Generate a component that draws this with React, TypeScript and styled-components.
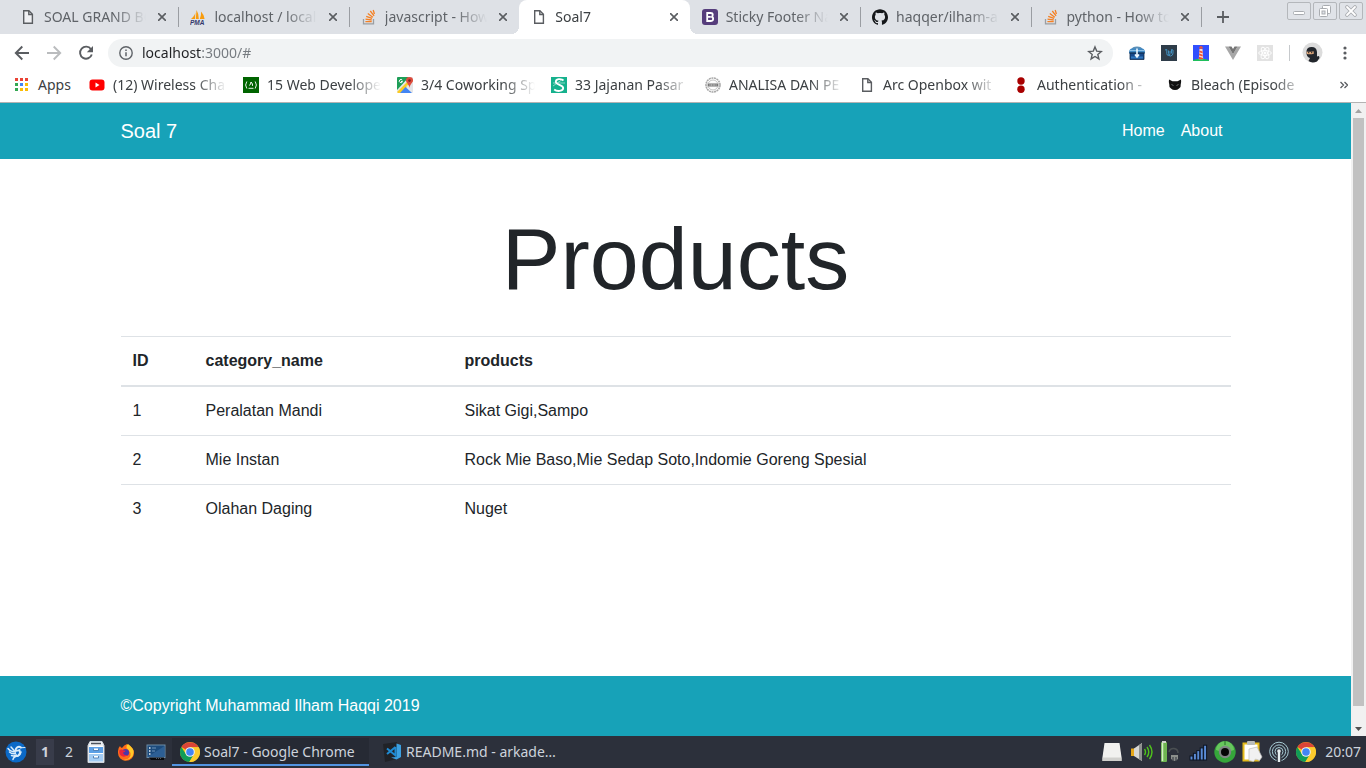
import React from "react";
import styled, { createGlobalStyle, css } from "styled-components";
import { SiGithub } from "react-icons/si";

const UI_FONT = `"Noto Sans", "Open Sans", sans-serif`;
const PAGE_FONT = `"Liberation Sans", Arial, sans-serif`;
const TEAL = "#17a2b8";

const GlobalStyle = createGlobalStyle`
  *, *::before, *::after { box-sizing: border-box; }
  body { margin: 0; background: #fff; }
  button { border: 0; padding: 0; background: none; font: inherit; color: inherit; cursor: pointer; }
  a { color: inherit; text-decoration: none; }
  svg { display: block; flex: none; }
`;

const Desktop = styled.div`
  display: flex;
  flex-direction: column;
  min-height: 100vh;
  font-family: ${UI_FONT};
`;

/* ---------- tab strip ---------- */

const TabStrip = styled.header`
  display: flex;
  height: 34px;
  padding-left: 8px;
  background: #dee1e6;
`;

const TabList = styled.nav`
  display: flex;
  flex: 0 1 1193px;
  min-width: 0;
`;

const TabItem = styled.div<{ $active?: boolean; $divider?: boolean }>`
  position: relative;
  display: flex;
  flex: 1 1 0;
  align-items: center;
  gap: 8px;
  min-width: 0;
  padding: 0 8px 0 12px;
  color: ${(p) => (p.$active ? "#3c4043" : "#5f6368")};

  ${(p) =>
    p.$divider &&
    css`
      &::after {
        content: "";
        position: absolute;
        right: -1px;
        top: 7px;
        width: 1px;
        height: 20px;
        background: #9a9da2;
      }
    `}

  ${(p) =>
    p.$active &&
    css`
      background: #fff;
      border-radius: 8px 8px 0 0;
      &::before,
      &::after {
        content: "";
        position: absolute;
        bottom: 0;
        width: 8px;
        height: 8px;
      }
      &::before {
        right: 100%;
        background: radial-gradient(circle at 0 0, transparent 8px, #fff 8px);
      }
      &::after {
        left: 100%;
        background: radial-gradient(circle at 100% 0, transparent 8px, #fff 8px);
      }
    `}
`;

const FadeText = styled.span`
  flex: 1;
  min-width: 0;
  overflow: hidden;
  white-space: nowrap;
  font-size: 14px;
  line-height: 20px;
  mask-image: linear-gradient(to right, #000 calc(100% - 32px), transparent);
`;

const TabLink = styled.a`
  display: flex;
  flex: 1;
  align-items: center;
  gap: 8px;
  min-width: 0;
`;

const IconButton = styled.button<{ $size: number; $color?: string }>`
  display: flex;
  flex: none;
  align-items: center;
  justify-content: center;
  width: ${(p) => p.$size}px;
  height: ${(p) => p.$size}px;
  color: ${(p) => p.$color ?? "#5a5d61"};
`;

const NewTab = styled(IconButton)`
  margin: 6px 0 0 11px;
`;

const WindowControls = styled.div`
  display: flex;
  gap: 2px;
  margin-left: auto;
  padding: 2px 3px 0 0;
`;

const WindowButton = styled.button`
  display: flex;
  align-items: center;
  justify-content: center;
  width: 24px;
  height: 18px;
  border: 1px solid #b4b7bb;
  border-radius: 2px;
  background: #e0e3e8;
`;

/* ---------- toolbar ---------- */

const Toolbar = styled.div`
  display: flex;
  align-items: center;
  height: 36px;
  padding: 2px 9px 0 10px;
  background: #fff;
`;

const NavButtons = styled.div`
  display: flex;
  gap: 8px;
  margin-right: 10px;
`;

const Omnibox = styled.label`
  display: flex;
  flex: 1;
  align-items: center;
  gap: 8px;
  height: 28px;
  padding: 0 10px;
  border-radius: 14px;
  background: #f1f3f4;
`;

const UrlInput = styled.input`
  flex: 1;
  min-width: 0;
  height: 20px;
  padding: 0;
  border: 0;
  outline: 0;
  font: 14px/20px ${UI_FONT};
  color: transparent;
  background: linear-gradient(to right, #202124 59px, #757a7f 59px);
  background-clip: text;
  -webkit-background-clip: text;
`;

const Extensions = styled.div`
  display: flex;
  align-items: center;
  gap: 16px;
  margin-left: 16px;
`;

const ToolDivider = styled.span`
  width: 1px;
  height: 16px;
  margin: 0 9px 0 16px;
  background: #c6c9cc;
`;

const ProfileTools = styled.div`
  display: flex;
  align-items: center;
  gap: 6px;
`;

/* ---------- bookmarks ---------- */

const BookmarkBar = styled.nav`
  display: flex;
  align-items: center;
  gap: 16px;
  height: 33px;
  padding: 0 14px 2px 14px;
  border-bottom: 1px solid #b3b3b3;
  background: #fff;
  color: #3c4043;
`;

const Bookmark = styled.a<{ $fit?: boolean }>`
  display: flex;
  flex: 0 1 ${(p) => (p.$fit ? "59px" : "138px")};
  align-items: center;
  gap: 8px;
  min-width: 0;
`;

const PlainText = styled.span`
  font-size: 14px;
  line-height: 20px;
`;

const Overflow = styled(IconButton)`
  margin-left: auto;
`;

/* ---------- web page ---------- */

const Viewport = styled.div`
  display: flex;
  flex: 1;
`;

const Page = styled.div`
  display: flex;
  flex: 1;
  flex-direction: column;
  min-width: 0;
  font: 16px/24px ${PAGE_FONT};
  color: #212529;
`;

const Container = styled.div`
  width: 100%;
  max-width: 1140px;
  margin: 0 auto;
  padding: 0 15px;
`;

const SiteNav = styled.nav`
  background: ${TEAL};
  color: #fff;
`;

const NavInner = styled(Container)`
  display: flex;
  align-items: center;
  justify-content: space-between;
  height: 56px;
`;

const Brand = styled.a`
  font-size: 20px;
  line-height: 30px;
`;

const NavLinks = styled.div`
  display: flex;
`;

const NavLink = styled.a`
  padding: 8px;
`;

const Content = styled.main`
  flex: 1;
`;

const Title = styled.h1`
  margin: 48px 0 26px;
  font-size: 88px;
  font-weight: 400;
  line-height: 103px;
  text-align: center;
`;

const DataTable = styled.table`
  width: 100%;
  border-collapse: collapse;
  text-align: left;

  th,
  td {
    padding: 12px;
    border-top: 1px solid #dee2e6;
  }
  thead th {
    border-bottom: 2px solid #dee2e6;
  }
`;

const Col = styled.col<{ $width?: number }>`
  width: ${(p) => (p.$width ? `${p.$width}px` : "auto")};
`;

const SiteFooter = styled.footer`
  background: ${TEAL};
  color: #fff;
  line-height: 60px;
`;

const ScrollTrack = styled.div`
  display: flex;
  flex-direction: column;
  align-items: center;
  width: 15px;
  background: #f1f1f1;
`;

const ScrollArrow = styled.button`
  display: flex;
  align-items: center;
  justify-content: center;
  width: 15px;
  height: 15px;
`;

const ScrollThumb = styled.div`
  flex: 1;
  width: 11px;
  margin-bottom: 15px;
  background: #c1c1c1;
`;

/* ---------- desktop panel ---------- */

const Panel = styled.footer`
  display: flex;
  align-items: center;
  height: 32px;
  padding: 0 5px;
  background: #2c303b;
  color: #cdd3dc;
  font-size: 14px;
  line-height: 20px;
`;

const Workspace = styled.button<{ $current?: boolean }>`
  width: 18px;
  height: 26px;
  font-weight: ${(p) => (p.$current ? 700 : 400)};
  background: ${(p) => (p.$current ? "#383c4a" : "transparent")};
`;

const Workspaces = styled.div`
  display: flex;
  gap: 6px;
  margin: 0 8px 0 9px;
`;

const Launchers = styled.div`
  display: flex;
  align-items: center;
  gap: 10px;
  margin-right: 6px;
`;

const Task = styled.button<{ $current?: boolean }>`
  display: flex;
  flex: 0 1 197px;
  align-items: center;
  gap: 4px;
  min-width: 0;
  height: 28px;
  padding: 0 8px;
  margin-right: 6px;
  white-space: nowrap;
  background: ${(p) => (p.$current ? "#262a34" : "transparent")};
  box-shadow: ${(p) => (p.$current ? "inset 0 -2px #5294e2" : "none")};
`;

const Tray = styled.div`
  display: flex;
  align-items: center;
  gap: 5px;
  margin-left: auto;
`;

const TraySlot = styled.span<{ $wide?: boolean }>`
  display: flex;
  flex: none;
  justify-content: center;
  width: ${(p) => (p.$wide ? 24 : 22)}px;
`;

const Clock = styled.time`
  margin-left: 3px;
`;

/* ---------- icons ---------- */

const FileIcon = () => (
  <svg width="16" height="16" viewBox="0 0 16 16" fill="#fff" fillOpacity=".5" stroke="#5a5d61" strokeWidth="1.4">
    <path d="M3.7 1.7h5.2l3.5 3.6v9H3.7z" />
    <path d="M8.8 1.9v3.6h3.5" fill="none" />
  </svg>
);

const PmaIcon = () => (
  <svg width="16" height="16" viewBox="0 0 16 16">
    <path d="M5.5 1.5Q5.8 6 1 10h4zM6.5 1Q9 5 8.8 10H5.8zM11 2.5q3 3 3.6 7.5H9.8Q11.5 6 11 2.5z" fill="#f89c0e" />
    <text x="0" y="15.5" fontSize="6.5" fontWeight="700" fontStyle="italic" fontFamily="Liberation Sans" fill="#34386b">PMA</text>
  </svg>
);

const StackIcon = () => (
  <svg width="16" height="16" viewBox="0 0 16 16" fill="none" strokeWidth="1.3">
    <path d="M2.5 10v4.8h10V10" stroke="#9a9ea2" />
    <path d="M4.4 12.7h6.3M4.5 10.2l6.2.8M5.2 7.3l5.9 2M6.8 4.4l5 3.8M9.3 2l3.8 4.9M12.2 1l1.2 4" stroke="#f48024" />
  </svg>
);

const BootstrapIcon = () => (
  <svg width="16" height="16" viewBox="0 0 16 16">
    <rect width="16" height="16" rx="3" fill="#563d7c" />
    <path d="M5.2 4h3.4c2.8 0 2.8 3.2.8 3.8 2.6.4 2.3 4.2-.8 4.2H5.2zM5.4 7.8h3.4" fill="none" stroke="#fff" strokeWidth="1.8" />
  </svg>
);

const CloseIcon = () => (
  <svg width="8" height="8" viewBox="0 0 8 8" stroke="currentColor" strokeWidth="1.6">
    <path d="M0 0l8 8M8 0L0 8" />
  </svg>
);

const YoutubeIcon = () => (
  <svg width="16" height="16" viewBox="0 0 16 16">
    <rect x="0.5" y="2.5" width="15" height="11" rx="3" fill="#f00" />
    <path d="M6.5 5.6v4.8l4-2.4z" fill="#fff" />
  </svg>
);

const AppsIcon = () => (
  <svg width="16" height="16" viewBox="0 0 16 16">
    {["#ea4335", "#ea4335", "#ea4335", "#34a853", "#4285f4", "#fbbc05", "#34a853", "#fbbc05", "#fbbc05"].map((c, i) => (
      <rect key={i} x={1 + (i % 3) * 5} y={1 + Math.floor(i / 3) * 5} width="3" height="3" fill={c} />
    ))}
  </svg>
);

const CampIcon = () => (
  <svg width="16" height="16" viewBox="0 0 16 16" fill="none" stroke="#fff">
    <rect width="16" height="16" fill="#006400" stroke="none" />
    <path d="M3.8 4.5q-2.4 3.5 0 7M12.2 4.5q2.4 3.5 0 7M5.5 11.3h5" strokeWidth=".9" />
    <path d="M8 5q2 2 1.500 3.800M8 5Q7.800 7 6.500 8.500" strokeWidth="1" />
  </svg>
);

const MapsIcon = () => (
  <svg width="16" height="16" viewBox="0 0 16 16">
    <rect width="16" height="16" rx="1" fill="#e7e8ea" />
    <path d="M0 1q0-1 1-1h11L0 13z" fill="#1e9e57" />
    <path d="M0 15L14 1l2 2v1L4 16H1z" fill="#fbcb24" />
    <path d="M3 16l5.5-6L15 16z" fill="#4285f4" />
    <path d="M9 9l7 6V6z" fill="#e3e4e6" />
    <path d="M12.5 0A3.5 3.5 0 0 0 9 3.6C9 6 12 7 12.5 11 13 7 16 6 16 3.6A3.5 3.5 0 0 0 12.500 0z" fill="#dd4b3e" />
    <circle cx="12.500" cy="3.600" r="1.300" fill="#7d231d" />
    <path d="M5.300 3.200A1.600 1.600 0 1 0 5.500 4.500H4" fill="none" stroke="#fff" />
  </svg>
);

const SIcon = () => (
  <svg width="16" height="16" viewBox="0 0 16 16" fill="none" stroke="#fff">
    <rect width="16" height="16" fill="#16b18d" stroke="none" />
    <path d="M12.500 3.500C10 1 4.500 2 4.800 5s7.400 2.800 7.400 6-6 4-9 1.500" strokeWidth="1.800" />
    <path d="M12 2L2 9M2 6h12" strokeWidth=".5" />
  </svg>
);

const SealIcon = () => (
  <svg width="16" height="16" viewBox="0 0 16 16" fill="none" stroke="#a9a9a9">
    <circle cx="8" cy="8" r="7" strokeWidth="1.600" strokeDasharray="2 .6" />
    <circle cx="8" cy="8" r="5" strokeWidth=".7" />
    <rect x="2.500" y="6.200" width="11" height="3.600" fill="#777" stroke="#ddd" strokeWidth=".6" />
    <path d="M4.500 8h7" stroke="#eee" strokeDasharray="1 .6" />
  </svg>
);

const DotsIcon = () => (
  <svg width="16" height="16" viewBox="0 0 16 16" fill="#a80000">
    <circle cx="8" cy="4" r="3.700" />
    <circle cx="8" cy="12.200" r="3.700" />
  </svg>
);

const CatIcon = () => (
  <svg width="16" height="16" viewBox="0 0 16 16">
    <path d="M2 2.500l3.500 1.800h5L14 2.500q.5 3-.3 5 .5 3-1.700 4-1.500 1.500-4 1.500t-4-1.500q-2.200-1-1.700-4-.8-2-.3-5z" fill="#111" />
    <path d="M4.500 7.500l2 1M11.500 7.500l-2 1" stroke="#999" strokeWidth=".7" fill="none" />
  </svg>
);

const BackIcon = () => (
  <svg width="16" height="16" viewBox="0 0 16 16" fill="none" stroke="currentColor" strokeWidth="1.900">
    <path d="M15 8H2M8.300 1.500L1.800 8l6.500 6.500" />
  </svg>
);

const ForwardIcon = () => (
  <svg width="16" height="16" viewBox="0 0 16 16" fill="none" stroke="currentColor" strokeWidth="1.900">
    <path d="M1 8h13M7.700 1.500L14.200 8l-6.500 6.500" />
  </svg>
);

const ReloadIcon = () => (
  <svg width="16" height="16" viewBox="0 0 16 16">
    <path d="M13 4.200A6 6 0 1 0 13.800 9.500" fill="none" stroke="currentColor" strokeWidth="1.900" />
    <path d="M15 1v6.200H8.800z" fill="currentColor" />
  </svg>
);

const InfoIcon = () => (
  <svg width="16" height="16" viewBox="0 0 16 16" fill="none" stroke="#5f6368" strokeWidth="1.400">
    <circle cx="8" cy="8" r="6.200" />
    <path d="M8 7.200v4M8 4.600v1.400" strokeWidth="1.500" />
  </svg>
);

const StarIcon = () => (
  <svg width="16" height="16" viewBox="0 0 16 16" fill="none" stroke="currentColor" strokeWidth="1.400">
    <path d="M8 1.900l1.700 4.200 4.600.4-3.500 3 1.100 4.400L8 11.500l-3.900 2.400 1.100-4.400-3.500-3 4.600-.4z" />
  </svg>
);

const BoxIcon = () => (
  <svg width="16" height="16" viewBox="0 0 16 16">
    <path d="M2.500 4.500Q3 1.500 8 1.500t5.500 3z" fill="#5b8fb8" />
    <path d="M0 8q0-4 2.500-4.500h11Q16 4 16 8z" fill="#3f88c4" />
    <path d="M1 5.500h14" stroke="#8cc0e6" />
    <path d="M0 8h16M1 8h14v6.500H1z" fill="#16498c" stroke="#102d52" strokeWidth=".8" />
    <path d="M2 12.500h12" stroke="#2f77bd" strokeWidth="2" />
    <path d="M8 3.500v8M6 9.500l2 2.500 2-2.500" stroke="#eef8ff" strokeWidth="1.600" fill="none" />
  </svg>
);

const UIcon = () => (
  <svg width="16" height="16" viewBox="0 0 16 16" fill="none" stroke="#4598cc" strokeWidth=".9">
    <rect width="16" height="16" fill="#2e3c49" stroke="none" />
    <path d="M4 5l1.800-.5v4q0 2 1.700 2 1.500 0 1.500-2V6M7.500 5.500v3.200q0 2.600 2.200 2.300Q12 10.500 12 8V5l-1.500-.5v4" />
  </svg>
);

const LighthouseIcon = () => (
  <svg width="16" height="16" viewBox="0 0 16 16">
    <rect width="16" height="16" fill="#304ffe" />
    <path d="M0 16v-1q8-2.500 16 0v1z" fill="#1fbf5c" />
    <path d="M6.500 4h3l.7 10.200H5.800z" fill="#f7ddd3" />
    <path d="M6.300 3.800V2L8 .8 9.700 2v1.800z" fill="#e8553c" />
    <path d="M6.400 5.500l3.200 1v1.700l-3.300-1zM6.200 8.500l3.500 1.200v1.700L6 10.200zM6 11.800l4 1.200v1.200H5.800z" fill="#f0502f" />
  </svg>
);

const VueIcon = () => (
  <svg width="16" height="16" viewBox="0 0 16 16">
    <path d="M0 1.500h3.500L8 9.200l4.500-7.700H16L8 15z" fill="#a7a7a7" />
    <path d="M3.500 1.500h3L8 4l1.500-2.500h3L8 9.200z" fill="#757575" />
  </svg>
);

const ReactIcon = () => (
  <svg width="16" height="16" viewBox="0 0 16 16" fill="none" stroke="#fff" strokeWidth=".9">
    <rect width="16" height="16" fill="#e2e2e2" stroke="none" />
    {[0, 60, 120].map((a) => (
      <ellipse key={a} cx="8" cy="8" rx="6.300" ry="2.500" transform={`rotate(${a} 8 8)`} />
    ))}
    <circle cx="8" cy="8" r="1.100" fill="#fff" />
  </svg>
);

const AvatarIcon = () => (
  <svg width="22" height="22" viewBox="0 0 22 22">
    <circle cx="10.500" cy="10.500" r="10" fill="#dcdcdc" />
    <path d="M4.500 9Q5 5 9.500 5q5-.2 5.500 5v4.500l2-.5.500 2-2.500 3.500q-5 2-8.500-.5l1.500-3Q4 15 4.500 9z" fill="#22262c" />
    <path d="M4.600 9.500q3.500.8 7-.2l.2 2.400q-3.500 1.200-7 .2z" fill="#e3ab7e" />
    <path d="M6 10.700h1.300M9 10.700h1.300" stroke="#222" />
  </svg>
);

const MenuIcon = () => (
  <svg width="16" height="16" viewBox="0 0 16 16" fill="currentColor">
    <circle cx="8" cy="3" r="1.600" />
    <circle cx="8" cy="8" r="1.600" />
    <circle cx="8" cy="13" r="1.600" />
  </svg>
);

const ChevronsIcon = () => (
  <svg width="8" height="8" viewBox="0 0 8 8" fill="none" stroke="currentColor" strokeWidth="1.300">
    <path d="M.5 1l3 3-3 3M4.500 1l3 3-3 3" />
  </svg>
);

const ChromeIcon = () => (
  <svg width="20" height="20" viewBox="0 0 20 20">
    <circle cx="10" cy="10" r="10" fill="#fbc916" />
    <path d="M10 10L1.340 5A10 10 0 0 1 18.660 5.300H10z" fill="#db4437" />
    <path d="M1.340 5A10 10 0 0 0 9.300 20l4.600-7.600L10 10l-4 2.300z" fill="#109d58" />
    <path d="M10 5.300H18.800A10 10 0 0 1 9.300 20l4.800-7.800z" fill="#fccb2d" />
    <circle cx="10" cy="10" r="4.800" fill="#f2f2f2" />
    <circle cx="10" cy="10" r="3.800" fill="#4285f4" />
  </svg>
);

const BirdIcon = () => (
  <svg width="22" height="22" viewBox="0 0 22 22" fill="none" stroke="#d9ecfb" strokeLinecap="round">
    <circle cx="11" cy="11" r="10.500" fill="#0b69c7" stroke="none" />
    <path d="M20 6.500l-4.500.300" strokeWidth="1" />
    <path d="M16 6.500q-2-1.500-4 0-2 1.800-1 3.500l3.500-1q1.500 4-2 6" strokeWidth="1.800" />
    <path d="M3 7.500q3 3.500 7.500 3.500M4.500 11q2.500 2.300 6 1.500M6 6l4 4.500" strokeWidth="1.500" />
    <path d="M6.500 14.500q2.500 1 5-.5M8 18.500q.5-3 5-3.500 2.500-1.500 3-4" strokeWidth="1.500" />
  </svg>
);

const CabinetIcon = () => (
  <svg width="18" height="22" viewBox="0 0 18 22">
    <path d="M3 .5h12l2 4v17H1v-17z" fill="#eef1f4" stroke="#cfd5dc" />
    <path d="M4 2.500h10" stroke="#4d535d" strokeWidth="1.500" />
    <rect x="2" y="5" width="14" height="7" fill="#5b9fe6" />
    <rect x="2" y="13" width="14" height="7.500" fill="#a3ccf4" />
    <path d="M2 5.500h14M2 12.500h14" stroke="#fff" />
    <path d="M6.500 7.500v2h5v-2M6.500 15v2h5v-2" fill="#fff" stroke="#3d6fa8" strokeWidth=".8" />
  </svg>
);

const FirefoxIcon = () => (
  <svg width="18" height="18" viewBox="0 0 18 18">
    <path d="M1 8q0-3 2-5 .5 1.500 2 2 2-3 5-4 1 1.500 3 2 4 3 4 7a8 7.800 0 0 1-16 0z" fill="#ff6a1a" />
    <path d="M11 1q2 1 4.500 4.500T15 14q-4 4-8.500 3 8-1 7-7Q12 7 9.500 5q-.5-3 1.500-4z" fill="#ffc928" />
    <circle cx="8.500" cy="9.500" r="3.600" fill="#4b37a8" />
    <path d="M2.500 7q2.500-1 4 .5l2 .3q-.5 1.700-2.500 1.700.5 3 4.500 2.500-3 3-6 1T2.500 7z" fill="#e8253c" />
  </svg>
);

const DesktopIcon = () => (
  <svg width="20" height="18" viewBox="0 0 20 18">
    <rect x="1" y="2" width="18" height="12.500" fill="#1c4b7c" stroke="#6c8ba6" />
    <path d="M1.500 14L18.500 3v11z" fill="#2d5f94" />
    <path d="M3 5h1.500M3 8h1.500M3 11h1.500" stroke="#e8eef5" strokeWidth="1.500" />
    <path d="M6 5h4M6 8h3" stroke="#6f95b9" />
    <path d="M3 14.500h15v2.500H5z" fill="#08090b" />
    <path d="M10 15.500h6" stroke="#505763" strokeDasharray="1 1" />
  </svg>
);

const CodeIcon = () => (
  <svg width="19" height="20" viewBox="0 0 19 20">
    <path d="M0 2l14-2v17L2 20z" fill="#202227" />
    <path d="M13.500 1.500L18 3v12l-4.500 2.500-5.500-2 5.500-.5z" fill="#3b9fe0" />
    <path d="M12.500 5v8.500L4 6.500M12.500 5L4 12" fill="none" stroke="#1f8ad2" strokeWidth="2" />
  </svg>
);

const DriveIcon = () => (
  <svg width="20" height="20" viewBox="0 0 20 20">
    <path d="M2.500 1h15l2 14v4H.5v-4z" fill="#f1f1ef" />
    <path d="M.5 15.500h19V19H.5z" fill="#d0d0cd" />
  </svg>
);

const SpeakerIcon = () => (
  <svg width="23" height="20" viewBox="0 0 23 20" fill="none">
    <path d="M1 6.500h4V14H1z" fill="#e6a71a" />
    <path d="M4 6.500L12 1v18l-8-5z" fill="#d7d7d5" />
    <path d="M9 3.200L12 1v18l-3-2z" fill="#8f918f" />
    <path d="M14.500 7q2 3 0 6M17 5q3.500 5 0 10M19.500 3q5 7 0 14" stroke="#4fc21b" strokeWidth="1.400" />
  </svg>
);

const BatteryIcon = () => (
  <svg width="22" height="22" viewBox="0 0 22 22" fill="none">
    <rect x="2" y="1" width="6" height="20" rx="1" fill="#6fb552" />
    <path d="M3.500 2v18" stroke="#d4efc6" strokeWidth="1.500" />
    <rect x="3" y="0" width="4" height="2" fill="#d0d3cc" />
    <path d="M10 11q1-4 5-3.500T19 12" stroke="#4a4f52" strokeWidth="1.500" />
    <path d="M12 14h7v3.500q-1 2.500-3.500 2.500T12 17.500z" fill="#8b8f8c" />
    <path d="M14 16v5M17 16v5" stroke="#2c303b" />
  </svg>
);

const SignalIcon = () => (
  <svg width="20" height="20" viewBox="0 0 20 20">
    {[0, 1, 2, 3, 4].map((i) => (
      <rect key={i} x={2 + i * 3.400} y={14 - i * 2.700} width="3" height={4 + i * 2.700} fill="#5a8bd6" stroke="#0d1524" strokeWidth="1" />
    ))}
  </svg>
);

const RingIcon = () => (
  <svg width="22" height="22" viewBox="0 0 22 22">
    <circle cx="11" cy="11" r="10.700" fill="#35a63a" />
    <path d="M2 9a9 9 0 0 1 18 0q-9 4-18 0z" fill="#68c65e" />
    <circle cx="11" cy="11" r="6.200" fill="#7f8784" />
    <circle cx="11" cy="11" r="4" fill="#050606" />
    <path d="M11 0v4" stroke="#207023" />
  </svg>
);

const ClipboardIcon = () => (
  <svg width="21" height="22" viewBox="0 0 21 22">
    <rect x="1.500" y="2.500" width="15" height="17" fill="#fff" stroke="#e5bb1b" strokeWidth="2" />
    <rect x="5" y="0" width="8" height="4" rx="1" fill="#b9bcbc" />
    <path d="M7 8l8-2 5 10-2.500 3.500-4-1.500-2 2.500-4.500-1z" fill="#f1f1f1" stroke="#bbb" strokeWidth=".7" />
  </svg>
);

const AntennaIcon = () => (
  <svg width="22" height="22" viewBox="0 0 22 22" fill="none" stroke="#a7cbd4">
    <circle cx="11" cy="10.500" r="9.300" strokeWidth="1" />
    <circle cx="11" cy="10.500" r="6.600" strokeWidth="1" />
    <circle cx="11" cy="10.500" r="4" strokeWidth="1" />
    <path d="M11 12v9" stroke="#2c303b" strokeWidth="5" />
    <path d="M11 10v11" stroke="#e6eef0" strokeWidth="2.400" />
    <circle cx="11" cy="10" r="1.800" fill="#e6eef0" stroke="none" />
  </svg>
);

const Triangle = ({ down }: { down?: boolean }) => (
  <svg width="7" height="4" viewBox="0 0 7 4">
    <path d={down ? "M0 0h7L3.500 4z" : "M0 4h7L3.500 0z"} fill={down ? "#505050" : "#a3a3a3"} />
  </svg>
);

/* ---------- data ---------- */

const tabs = [
  { title: "SOAL GRAND BO", icon: <FileIcon />, divider: true },
  { title: "localhost / local", icon: <PmaIcon />, divider: true },
  { title: "javascript - How", icon: <StackIcon /> },
  { title: "Soal7", icon: <FileIcon />, active: true },
  { title: "Sticky Footer Na", icon: <BootstrapIcon />, divider: true },
  { title: "haqqer/ilham-a", icon: <SiGithub size={16} color="#15171a" />, divider: true },
  { title: "python - How to", icon: <StackIcon />, divider: true },
];

const bookmarks = [
  { title: "(12) Wireless Cha", icon: <YoutubeIcon /> },
  { title: "15 Web Develope", icon: <CampIcon /> },
  { title: "3/4 Coworking Sp", icon: <MapsIcon /> },
  { title: "33 Jajanan Pasar", icon: <SIcon /> },
  { title: "ANALISA DAN PE", icon: <SealIcon /> },
  { title: "Arc Openbox wit", icon: <FileIcon /> },
  { title: "Authentication -", icon: <DotsIcon /> },
  { title: "Bleach (Episode", icon: <CatIcon /> },
];

const rows = [
  { id: 1, category: "Peralatan Mandi", products: "Sikat Gigi,Sampo" },
  { id: 2, category: "Mie Instan", products: "Rock Mie Baso,Mie Sedap Soto,Indomie Goreng Spesial" },
  { id: 3, category: "Olahan Daging", products: "Nuget" },
];

export default function App() {
  return (
    <Desktop>
      <GlobalStyle />
      <TabStrip>
        <TabList>
          {tabs.map((t) => (
            <TabItem key={t.title} $active={t.active} $divider={t.divider}>
              <TabLink href="#">
                {t.icon}
                <FadeText>{t.title}</FadeText>
              </TabLink>
              <IconButton $size={16} aria-label="Close tab"><CloseIcon /></IconButton>
            </TabItem>
          ))}
        </TabList>
        <NewTab $size={22} aria-label="New tab">
          <svg width="12" height="12" viewBox="0 0 12 12" stroke="currentColor" strokeWidth="1.800">
            <path d="M6 0v12M0 6h12" />
          </svg>
        </NewTab>
        <WindowControls>
          <WindowButton aria-label="Minimize">
            <svg width="12" height="12" viewBox="0 0 12 12"><rect x=".5" y="6.500" width="11" height="3" rx="1" fill="#fff" stroke="#a9acb0" /></svg>
          </WindowButton>
          <WindowButton aria-label="Restore">
            <svg width="12" height="12" viewBox="0 0 12 12" fill="#fff" stroke="#a9acb0">
              <rect x="3.500" y=".5" width="8" height="8" rx="1" />
              <rect x=".5" y="3.500" width="8" height="8" rx="1" />
              <rect x="3" y="6" width="3" height="3" fill="#e0e3e8" />
            </svg>
          </WindowButton>
          <WindowButton aria-label="Close">
            <svg width="12" height="12" viewBox="0 0 12 12" strokeLinecap="round">
              <path d="M2 2l8 8M10 2l-8 8" stroke="#a9acb0" strokeWidth="3.600" />
              <path d="M2 2l8 8M10 2l-8 8" stroke="#fff" strokeWidth="1.800" />
            </svg>
          </WindowButton>
        </WindowControls>
      </TabStrip>

      <Toolbar>
        <NavButtons>
          <IconButton $size={24} aria-label="Back"><BackIcon /></IconButton>
          <IconButton $size={24} $color="#babcbe" aria-label="Forward"><ForwardIcon /></IconButton>
          <IconButton $size={24} aria-label="Reload"><ReloadIcon /></IconButton>
        </NavButtons>
        <Omnibox>
          <InfoIcon />
          <UrlInput aria-label="Address" defaultValue="localhost:3000/#" />
          <IconButton $size={16} aria-label="Bookmark this page"><StarIcon /></IconButton>
        </Omnibox>
        <Extensions>
          <BoxIcon />
          <UIcon />
          <LighthouseIcon />
          <VueIcon />
          <ReactIcon />
        </Extensions>
        <ToolDivider />
        <ProfileTools>
          <IconButton $size={28} aria-label="Profile"><AvatarIcon /></IconButton>
          <IconButton $size={24} aria-label="Menu"><MenuIcon /></IconButton>
        </ProfileTools>
      </Toolbar>

      <BookmarkBar>
        <Bookmark href="#" $fit>
          <AppsIcon />
          <PlainText>Apps</PlainText>
        </Bookmark>
        {bookmarks.map((b) => (
          <Bookmark key={b.title} href="#">
            {b.icon}
            <FadeText>{b.title}</FadeText>
          </Bookmark>
        ))}
        <Overflow $size={16} aria-label="More bookmarks"><ChevronsIcon /></Overflow>
      </BookmarkBar>

      <Viewport>
        <Page>
          <SiteNav>
            <NavInner>
              <Brand href="#">Soal 7</Brand>
              <NavLinks>
                <NavLink href="#">Home</NavLink>
                <NavLink href="#">About</NavLink>
              </NavLinks>
            </NavInner>
          </SiteNav>
          <Content>
            <Container>
              <Title>Products</Title>
              <DataTable>
                <colgroup>
                  <Col $width={73} />
                  <Col $width={259} />
                  <Col />
                </colgroup>
                <thead>
                  <tr>
                    <th scope="col">ID</th>
                    <th scope="col">category_name</th>
                    <th scope="col">products</th>
                  </tr>
                </thead>
                <tbody>
                  {rows.map((r) => (
                    <tr key={r.id}>
                      <td>{r.id}</td>
                      <td>{r.category}</td>
                      <td>{r.products}</td>
                    </tr>
                  ))}
                </tbody>
              </DataTable>
            </Container>
          </Content>
          <SiteFooter>
            <Container>©Copyright Muhammad Ilham Haqqi 2019</Container>
          </SiteFooter>
        </Page>
        <ScrollTrack>
          <ScrollArrow aria-label="Scroll up"><Triangle /></ScrollArrow>
          <ScrollThumb />
          <ScrollArrow aria-label="Scroll down"><Triangle down /></ScrollArrow>
        </ScrollTrack>
      </Viewport>

      <Panel>
        <IconButton $size={22} aria-label="Applications"><BirdIcon /></IconButton>
        <Workspaces>
          <Workspace $current>1</Workspace>
          <Workspace>2</Workspace>
        </Workspaces>
        <Launchers>
          <IconButton $size={20} aria-label="Files"><CabinetIcon /></IconButton>
          <IconButton $size={20} aria-label="Firefox"><FirefoxIcon /></IconButton>
          <IconButton $size={20} aria-label="Show desktop"><DesktopIcon /></IconButton>
        </Launchers>
        <Task $current>
          <ChromeIcon />
          Soal7 - Google Chrome
        </Task>
        <Task>
          <CodeIcon />
          README.md - arkade…
        </Task>
        <Tray>
          <TraySlot $wide><DriveIcon /></TraySlot>
          <TraySlot $wide><SpeakerIcon /></TraySlot>
          <TraySlot $wide><BatteryIcon /></TraySlot>
          <TraySlot><SignalIcon /></TraySlot>
          <TraySlot><RingIcon /></TraySlot>
          <TraySlot><ClipboardIcon /></TraySlot>
          <TraySlot><AntennaIcon /></TraySlot>
          <TraySlot><ChromeIcon /></TraySlot>
          <Clock>20:07</Clock>
        </Tray>
      </Panel>
    </Desktop>
  );
}
